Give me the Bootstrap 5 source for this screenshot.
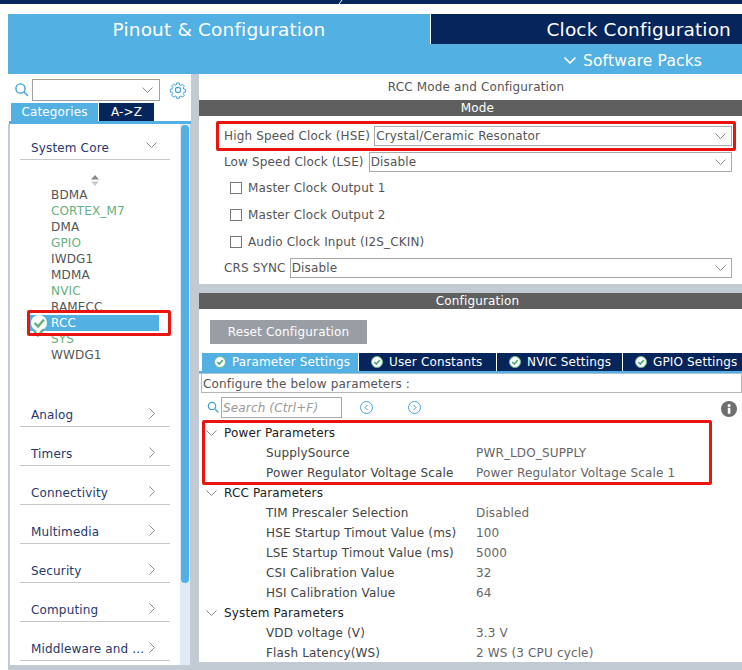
<!DOCTYPE html>
<html lang="en">
<head>
  <meta charset="UTF-8">
  <title>RCC Mode and Configuration</title>
  <meta name="viewport" content="width=device-width, initial-scale=1">
  <link href="https://cdn.jsdelivr.net/npm/bootstrap@5.3.3/dist/css/bootstrap.min.css" rel="stylesheet">
  <style>
    html, body { height: 670px; overflow: hidden; }
    body { background: #fff; font-family: "DejaVu Sans", sans-serif; font-size: 12px; color: #555; width: 742px; letter-spacing: .15px; }
    .top-strip { height: 4px; background: #06255a; position: relative; }
    .top-strip svg { position: absolute; left: 338px; top: 0; }
    .top-gap { height: 10px; }
    .head-row { margin-left: 8px; height: 60px; background: #52b0e3; }
    .head-left { width: 422px; color: #fff; font-size: 18.5px; padding: 2px 0 0 0; text-align: center; }
    .head-right { flex: 1; }
    .head-clock { height: 30px; background: #06255a; color: #fff; font-size: 18.5px; text-align: right; padding: 2px 11px 0 0; border-left: 1px solid #fff; }
    .head-packs { height: 30px; color: #fff; font-size: 15.5px; padding: 3px 0 0 133px; display: flex; align-items: center; gap: 6px; line-height: 20px; }
    .work-area { height: 596px; margin-left: 8px; background: #c2cbd3; }
    .side-col { width: 183px; background: #fff; height: 591px; }
    .side-search { height: 29px; padding: 2px 0 0 6px; }
    .side-combo { width: 128px; height: 22px; border: 1px solid #a0a0a0; margin-left: 3px; padding-right: 6px; }
    .side-tabs { height: 18px; margin-left: 3px; }
    .side-tab { height: 18px; color: #fff; font-size: 12px; text-align: center; line-height: 19px; }
    .tab-cat { width: 87px; background: #52b0e3; margin-right: 1px; }
    .tab-az { width: 55px; background: #06255a; }
    .side-rule { height: 3px; background: #52b0e3; margin-left: 1px; }
    .side-body { height: 541px; background: #c2cbd3; padding-left: 2px; position: relative; }
    .side-list { width: 170px; background: #fff; padding: 0 10px; height: 100%; overflow: hidden; }
    .scroll-track { width: 10px; margin-right: 1px; background: #dfeaf6; padding-top: 1px; }
    .scroll-thumb { height: 458px; background: #52b0e3; border-radius: 4px; width: 8px; margin-left: 1px; }
    .cat-row { height: 39px; border-bottom: 1px solid #c4c8cc; color: #26386b; font-size: 12px; display: flex; align-items: flex-end; justify-content: space-between; padding: 0 15px 2px 11px; white-space: nowrap; }
    .cat-row svg { margin-bottom: 5px; }
    .cat-row.cat-first { height: 36px; padding-right: 13px; }
    .cat-row.cat-first svg { margin-bottom: 9px; }
    .sort-mark { height: 27px; padding: 11px 0 0 71px; }
    .peri-list { height: 201px; padding-left: 31px; }
    .peri-item { height: 16px; line-height: 16px; font-size: 12px; color: #555; position: relative; }
    .peri-on { color: #66b27c; }
    .peri-sel { background: #52b0e3; color: #fff; margin: 0 0 0 -21px; padding-left: 21px; width: 129px; height: 16px; }
    .peri-sel svg { position: absolute; left: 0; top: 0; }
    .sys-check { position: absolute; left: -18px; top: -3px; }
    .main-col { flex: 1; margin-left: 8px; min-width: 0; height: 596px; }
    .mode-pane { height: 210px; background: #fff; }
    .pane-title { height: 26px; text-align: center; line-height: 26px; color: #555; font-size: 12px; padding-left: 11px; }
    .pane-bar { height: 16px; background: #5f5f5f; color: #fff; text-align: center; line-height: 17px; font-size: 12px; padding-left: 14px; }
    .mode-row { height: 27px; padding-left: 25px; color: #555; display: flex; align-items: center; }
    .mode-row-top { height: 26px; margin-top: 7px; }
    .mode-row-low { height: 25px; }
    .mode-row-last { height: 25px; }
    .combo-box { flex: 1; height: 20px; border: 1px solid #a9a9a9; margin-left: 4px; margin-right: 10px; padding: 0 5px 0 1px; display: flex; align-items: center; justify-content: space-between; line-height: 18px; }
    .mode-row-low .combo-box { margin-left: 5px; }
    .check-row { padding-left: 31px; }
    .check-box { width: 12px; height: 12px; border: 1px solid #777; margin-right: 6px; background: #fff; flex: none; }
    .config-pane { height: 369px; margin-top: 9px; background: #fff; position: relative; }
    .reset-btn { width: 157px; height: 24px; background: #999ea5; color: #fff; text-align: center; line-height: 24px; margin: 11px 0 9px 11px; }
    .param-tabs { height: 18px; margin-left: 3px; }
    .param-tab { height: 18px; background: #06255a; color: #fff; display: flex; align-items: center; padding-left: 12px; gap: 6px; border-right: 1px solid #fff; white-space: nowrap; overflow: hidden; flex: none; }
    .param-tab.is-active { background: #52b0e3; width: 157px; }
    .tab-user { width: 138px; }
    .tab-nvic { width: 126px; }
    .tab-gpio { width: 119px; border-right: 0; }
    .param-rule { height: 3px; background: #52b0e3; border-bottom: 1px solid #a9c5d5; }
    .param-note { height: 19px; border: 1px solid #b5b5b5; border-top: 0; margin-left: 2px; line-height: 20px; padding-left: 1px; }
    .param-search { height: 30px; padding: 4px 0 0 8px; }
    .search-box { width: 121px; height: 21px; border: 1px solid #a9a9a9; margin-left: 2px; color: #999; font-style: italic; line-height: 20px; padding-left: 1px; }
    .nav-btn { margin-left: 18px; }
    .nav-btn + .nav-btn { margin-left: 35px; }
    .info-dot { margin-left: auto; margin-right: 5px; }
    .tree-row { height: 20px; line-height: 20px; display: flex; }
    .tree-head { padding-left: 7px; color: #222; align-items: center; }
    .tree-head svg { margin-right: 7px; }
    .tree-name { width: 277px; padding-left: 67px; color: #444; white-space: nowrap; flex: none; }
    .tree-val { color: #666; white-space: nowrap; }
    .mark-box { position: absolute; border: 3px solid #e8140f; border-radius: 2px; pointer-events: none; }
    .mark-hse { left: 216px; top: 121px; width: 520px; height: 30px; }
    .mark-rcc { left: 27px; top: 310px; width: 144px; height: 26px; }
    .mark-power { left: 202px; top: 420px; width: 510px; height: 65px; }
  </style>
</head>
<body class="position-relative">
  <div class="top-strip">
    <svg width="8" height="4"><path d="M1 4 L4 0" stroke="#fff" fill="none"/></svg>
  </div>
  <div class="top-gap"></div>

  <div class="head-row d-flex">
    <div class="head-left">Pinout &amp; Configuration</div>
    <div class="head-right">
      <div class="head-clock">Clock Configuration</div>
      <div class="head-packs">
        <svg width="14" height="9" viewBox="0 0 14 9"><path d="M1.5 1.5 L7 7 L12.5 1.5" stroke="#fff" stroke-width="1.6" fill="none"/></svg>
        <span>Software Packs</span>
      </div>
    </div>
  </div>

  <div class="work-area d-flex">
    <div class="side-col">
      <div class="side-search d-flex align-items-center">
        <svg width="15" height="15" viewBox="0 0 15 15"><circle cx="6.5" cy="6.5" r="4.6" stroke="#3f9fd8" stroke-width="1.4" fill="none"/><path d="M10 10 L14 14" stroke="#3f9fd8" stroke-width="1.5"/></svg>
        <div class="side-combo d-flex align-items-center justify-content-end">
          <svg width="11" height="6" viewBox="0 0 11 6"><path d="M.5 .5 L5.5 5.5 L10.5 .5" stroke="#8a8a8a" fill="none"/></svg>
        </div>
        <svg class="ms-auto me-1" width="18" height="18" viewBox="0 0 18 18" fill="none" stroke="#3f9fd8" stroke-width="1.1"><circle cx="9" cy="9" r="2.6"/><path d="M7.6 1.2h2.8l.4 2.2 1.4.6 1.9-1.3 2 2-1.3 1.9.6 1.4 2.1.4v2.8l-2.1.4-.6 1.4 1.3 1.9-2 2-1.9-1.3-1.4.6-.4 2.1H7.6l-.4-2.1-1.4-.6-1.9 1.3-2-2 1.3-1.9-.6-1.4-2.1-.4V8.2l2.1-.4.6-1.4-1.3-1.9 2-2 1.9 1.3 1.4-.6z" transform="translate(.9 .9) scale(.9)"/></svg>
      </div>
      <div class="side-tabs d-flex">
        <div class="side-tab tab-cat">Categories</div>
        <div class="side-tab tab-az">A-&gt;Z</div>
      </div>
      <div class="side-rule"></div>
      <div class="side-body d-flex">
        <div class="side-list">
          <div class="cat-row cat-first">
            <span>System Core</span>
            <svg width="11" height="6" viewBox="0 0 11 6"><path d="M.5 .5 L5.5 5.5 L10.5 .5" stroke="#8a8a8a" fill="none"/></svg>
          </div>
          <div class="sort-mark">
            <svg width="8" height="11" viewBox="0 0 8 11"><path d="M4 0 L8 4.5 H0 Z" fill="#888"/><path d="M4 11 L8 6.5 H0 Z" fill="#ccc"/></svg>
          </div>
          <div class="peri-list">
            <div class="peri-item">BDMA</div>
            <div class="peri-item peri-on">CORTEX_M7</div>
            <div class="peri-item">DMA</div>
            <div class="peri-item peri-on">GPIO</div>
            <div class="peri-item">IWDG1</div>
            <div class="peri-item">MDMA</div>
            <div class="peri-item peri-on">NVIC</div>
            <div class="peri-item">RAMECC</div>
            <div class="peri-item peri-sel">
              <svg width="18" height="16" viewBox="0 0 18 16"><circle cx="9" cy="8" r="8" fill="#fff"/><path d="M4.5 8 L8 11.5 L14 4.5" stroke="#5fb37a" stroke-width="2.4" fill="none"/></svg>
              RCC
            </div>
            <div class="peri-item peri-on">
              <svg class="sys-check" width="12" height="10" viewBox="0 0 12 10"><path d="M1 3 L5 7.5 L11 1" stroke="#5fb37a" stroke-width="2.4" fill="none"/></svg>
              SYS
            </div>
            <div class="peri-item">WWDG1</div>
          </div>
          <div class="cat-row"><span>Analog</span><svg width="6" height="11" viewBox="0 0 6 11"><path d="M.5 .5 L5.5 5.5 L.5 10.5" stroke="#8a8a8a" fill="none"/></svg></div>
          <div class="cat-row"><span>Timers</span><svg width="6" height="11" viewBox="0 0 6 11"><path d="M.5 .5 L5.5 5.5 L.5 10.5" stroke="#8a8a8a" fill="none"/></svg></div>
          <div class="cat-row"><span>Connectivity</span><svg width="6" height="11" viewBox="0 0 6 11"><path d="M.5 .5 L5.5 5.5 L.5 10.5" stroke="#8a8a8a" fill="none"/></svg></div>
          <div class="cat-row"><span>Multimedia</span><svg width="6" height="11" viewBox="0 0 6 11"><path d="M.5 .5 L5.5 5.5 L.5 10.5" stroke="#8a8a8a" fill="none"/></svg></div>
          <div class="cat-row"><span>Security</span><svg width="6" height="11" viewBox="0 0 6 11"><path d="M.5 .5 L5.5 5.5 L.5 10.5" stroke="#8a8a8a" fill="none"/></svg></div>
          <div class="cat-row"><span>Computing</span><svg width="6" height="11" viewBox="0 0 6 11"><path d="M.5 .5 L5.5 5.5 L.5 10.5" stroke="#8a8a8a" fill="none"/></svg></div>
          <div class="cat-row"><span>Middleware and ...</span><svg width="6" height="11" viewBox="0 0 6 11"><path d="M.5 .5 L5.5 5.5 L.5 10.5" stroke="#8a8a8a" fill="none"/></svg></div>
        </div>
        <div class="scroll-track"><div class="scroll-thumb"></div></div>
      </div>
    </div>

    <div class="main-col">
      <div class="mode-pane">
        <div class="pane-title">RCC Mode and Configuration</div>
        <div class="pane-bar">Mode</div>
        <div class="mode-row mode-row-top">
          <span>High Speed Clock (HSE)</span>
          <div class="combo-box"><span>Crystal/Ceramic Resonator</span><svg width="11" height="6" viewBox="0 0 11 6"><path d="M.5 .5 L5.5 5.5 L10.5 .5" stroke="#8a8a8a" fill="none"/></svg></div>
        </div>
        <div class="mode-row mode-row-low">
          <span>Low Speed Clock (LSE)</span>
          <div class="combo-box"><span>Disable</span><svg width="11" height="6" viewBox="0 0 11 6"><path d="M.5 .5 L5.5 5.5 L10.5 .5" stroke="#8a8a8a" fill="none"/></svg></div>
        </div>
        <div class="mode-row check-row"><div class="check-box"></div><span>Master Clock Output 1</span></div>
        <div class="mode-row check-row"><div class="check-box"></div><span>Master Clock Output 2</span></div>
        <div class="mode-row check-row"><div class="check-box"></div><span>Audio Clock Input (I2S_CKIN)</span></div>
        <div class="mode-row mode-row-last">
          <span>CRS SYNC</span>
          <div class="combo-box"><span>Disable</span><svg width="11" height="6" viewBox="0 0 11 6"><path d="M.5 .5 L5.5 5.5 L10.5 .5" stroke="#8a8a8a" fill="none"/></svg></div>
        </div>
      </div>

      <div class="config-pane">
        <div class="pane-bar">Configuration</div>
        <div class="reset-btn">Reset Configuration</div>
        <div class="param-tabs d-flex">
          <div class="param-tab is-active"><svg width="12" height="12" viewBox="0 0 12 12"><circle cx="6" cy="6" r="5.5" fill="#fff" stroke="#6bb98a"/><path d="M3.2 6 L5.3 8 L8.8 4" stroke="#4fa874" stroke-width="1.6" fill="none"/></svg>Parameter Settings</div>
          <div class="param-tab tab-user"><svg width="12" height="12" viewBox="0 0 12 12"><circle cx="6" cy="6" r="5.5" fill="#fff" stroke="#6bb98a"/><path d="M3.2 6 L5.3 8 L8.8 4" stroke="#4fa874" stroke-width="1.6" fill="none"/></svg>User Constants</div>
          <div class="param-tab tab-nvic"><svg width="12" height="12" viewBox="0 0 12 12"><circle cx="6" cy="6" r="5.5" fill="#fff" stroke="#6bb98a"/><path d="M3.2 6 L5.3 8 L8.8 4" stroke="#4fa874" stroke-width="1.6" fill="none"/></svg>NVIC Settings</div>
          <div class="param-tab tab-gpio"><svg width="12" height="12" viewBox="0 0 12 12"><circle cx="6" cy="6" r="5.5" fill="#fff" stroke="#6bb98a"/><path d="M3.2 6 L5.3 8 L8.8 4" stroke="#4fa874" stroke-width="1.6" fill="none"/></svg>GPIO Settings</div>
        </div>
        <div class="param-rule"></div>
        <div class="param-note">Configure the below parameters :</div>
        <div class="param-search d-flex align-items-start">
          <svg class="mt-1" width="12" height="12" viewBox="0 0 12 12"><circle cx="5" cy="5" r="3.7" stroke="#3f9fd8" stroke-width="1.2" fill="none"/><path d="M8 8 L11.5 11.5" stroke="#3f9fd8" stroke-width="1.3"/></svg>
          <div class="search-box">Search (Ctrl+F)</div>
          <svg class="nav-btn mt-1" width="13" height="13" viewBox="0 0 13 13" fill="none" stroke="#4aa5dc"><circle cx="6.5" cy="6.5" r="6"/><path d="M7.5 4 L5 6.5 L7.5 9"/></svg>
          <svg class="nav-btn mt-1" width="13" height="13" viewBox="0 0 13 13" fill="none" stroke="#4aa5dc"><circle cx="6.5" cy="6.5" r="6"/><path d="M5.5 4 L8 6.5 L5.5 9"/></svg>
          <svg class="info-dot mt-1" width="16" height="16" viewBox="0 0 16 16"><circle cx="8" cy="8" r="8" fill="#6e6e6e"/><rect x="6.8" y="6.8" width="2.6" height="6" fill="#fff"/><circle cx="8.1" cy="4.4" r="1.5" fill="#fff"/></svg>
        </div>
        <div class="tree-row tree-head"><svg width="11" height="6" viewBox="0 0 11 6"><path d="M.5 .5 L5.5 5.5 L10.5 .5" stroke="#8a8a8a" fill="none"/></svg>Power Parameters</div>
        <div class="tree-row"><div class="tree-name">SupplySource</div><div class="tree-val">PWR_LDO_SUPPLY</div></div>
        <div class="tree-row"><div class="tree-name">Power Regulator Voltage Scale</div><div class="tree-val">Power Regulator Voltage Scale 1</div></div>
        <div class="tree-row tree-head"><svg width="11" height="6" viewBox="0 0 11 6"><path d="M.5 .5 L5.5 5.5 L10.5 .5" stroke="#8a8a8a" fill="none"/></svg>RCC Parameters</div>
        <div class="tree-row"><div class="tree-name">TIM Prescaler Selection</div><div class="tree-val">Disabled</div></div>
        <div class="tree-row"><div class="tree-name">HSE Startup Timout Value (ms)</div><div class="tree-val">100</div></div>
        <div class="tree-row"><div class="tree-name">LSE Startup Timout Value (ms)</div><div class="tree-val">5000</div></div>
        <div class="tree-row"><div class="tree-name">CSI Calibration Value</div><div class="tree-val">32</div></div>
        <div class="tree-row"><div class="tree-name">HSI Calibration Value</div><div class="tree-val">64</div></div>
        <div class="tree-row tree-head"><svg width="11" height="6" viewBox="0 0 11 6"><path d="M.5 .5 L5.5 5.5 L10.5 .5" stroke="#8a8a8a" fill="none"/></svg>System Parameters</div>
        <div class="tree-row"><div class="tree-name">VDD voltage (V)</div><div class="tree-val">3.3 V</div></div>
        <div class="tree-row"><div class="tree-name">Flash Latency(WS)</div><div class="tree-val">2 WS (3 CPU cycle)</div></div>
      </div>
    </div>
  </div>

  <div class="mark-box mark-hse"></div>
  <div class="mark-box mark-rcc"></div>
  <div class="mark-box mark-power"></div>

  <script src="https://cdn.jsdelivr.net/npm/bootstrap@5.3.3/dist/js/bootstrap.bundle.min.js"></script>
</body>
</html>
